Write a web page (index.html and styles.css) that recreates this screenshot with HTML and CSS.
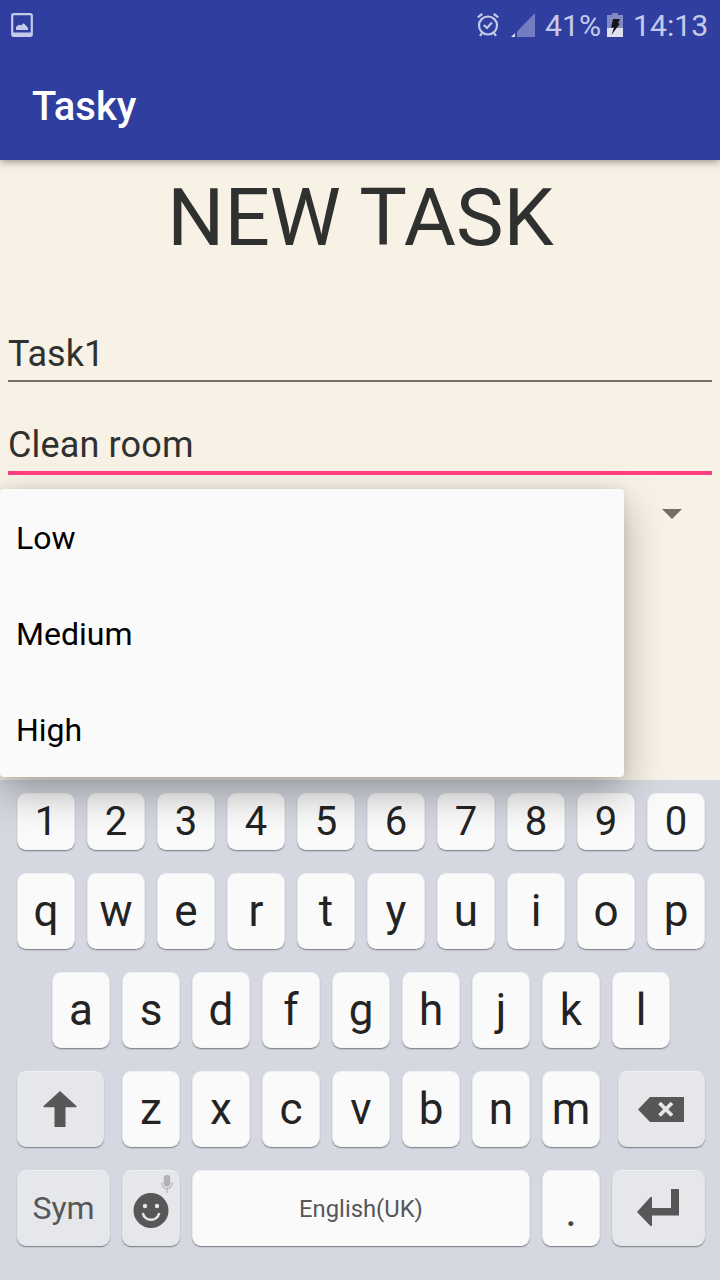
FILE: index.html
```html
<!DOCTYPE html>
<html lang="en">
<head>
<meta charset="utf-8">
<title>Tasky</title>
<link rel="stylesheet" href="styles.css">
</head>
<body>
<div class="screen">
  <header class="top">
    <div class="status">
      <svg class="photo" width="22" height="24" viewBox="0 0 22 24"><rect x="1.2" y="1.2" width="19.6" height="21.6" rx="1.5" fill="none" stroke="#c5cae9" stroke-width="2.2"/><path d="M2 19.5h18V23H2zM5 17v-3l3-2.5 2 1 2.500-2.200 2.500 2.200L17 15v2z" fill="#c5cae9"/></svg>
      <svg class="alarm" width="22" height="24" viewBox="0 0 22 24" fill="none" stroke="#c5cae9" stroke-width="2.2"><circle cx="11" cy="12.500" r="9"/><path d="M.8 4.300 5.300.8M21.200 4.300 16.700.8M5 20l-2 3M17 20l2 3M6.800 12l3.200 3 5-5.500"/></svg>
      <svg class="signal" width="24" height="24" viewBox="0 0 24 24"><path d="M6 18.500 24 0v24H6z" fill="#727cbf"/><path d="M0 24l4-4v4z" fill="#dcdff2"/></svg>
      <span class="percent">41%</span>
      <svg class="battery" width="16" height="24" viewBox="0 0 16 24"><path d="M5 0h6v2h5v13H0V2h5z" fill="#8289c5"/><path d="M0 15h16v9H0z" fill="#dfe1f1"/><path d="M6 6h7l-2 4.500h2L4.500 22 7 14.500H4z" fill="#151515"/></svg>
      <span class="clock">14:13</span>
    </div>
    <div class="appbar">Tasky</div>
  </header>
  <main class="form">
    <h1 class="title">NEW TASK</h1>
    <div class="field">Task1</div>
    <div class="field focused">Clean room</div>
    <div class="spinner"><svg width="20" height="10" viewBox="0 0 20 10"><path d="M0 0h20L10 10z" fill="#716f69"/></svg></div>
    <ul class="menu"><li>Low</li><li>Medium</li><li>High</li></ul>
  </main>
  <section class="keyboard">
    <div class="row numbers"><b>1</b><b>2</b><b>3</b><b>4</b><b>5</b><b>6</b><b>7</b><b>8</b><b>9</b><b>0</b></div>
    <div class="row"><b>q</b><b>w</b><b>e</b><b>r</b><b>t</b><b>y</b><b>u</b><b>i</b><b>o</b><b>p</b></div>
    <div class="row"><b>a</b><b>s</b><b>d</b><b>f</b><b>g</b><b>h</b><b>j</b><b>k</b><b>l</b></div>
    <div class="row">
      <b class="fn shift"><svg width="34" height="36" viewBox="0 0 34 36"><path d="M17 0 33.500 15v1.200H22.500V36h-11V16.200H.5V15z" fill="#575757"/></svg></b>
      <b>z</b><b>x</b><b>c</b><b>v</b><b>b</b><b>n</b><b>m</b>
      <b class="fn delete"><svg width="46" height="25" viewBox="0 0 46 25"><path d="M0 12.500 12 0h34v25H12z" fill="#575757"/><path d="M21.500 6 34 18.500M34 6 21.500 18.500" stroke="#e6e7eb" stroke-width="3.800"/></svg></b>
    </div>
    <div class="row">
      <b class="fn sym">Sym</b>
      <b class="fn emoji">
        <svg class="mic" width="12" height="18" viewBox="0 0 12 18"><rect x="2.700" y="0" width="6.600" height="11.500" rx="3" fill="#b1b2b5"/><path d="M.7 7.500c0 8 10.600 8 10.600 0M6 13.500V18" fill="none" stroke="#b1b2b5" stroke-width="1.200"/></svg>
        <svg class="face" width="36" height="36" viewBox="0 0 36 36"><circle cx="18" cy="17.500" r="17.500" fill="#575757"/><circle cx="12" cy="13" r="2.200" fill="#e6e7eb"/><circle cx="24" cy="13" r="2.200" fill="#e6e7eb"/><path d="M9.800 20c1.800 9 14.600 9 16.400 0" fill="none" stroke="#e6e7eb" stroke-width="2.500"/></svg>
      </b>
      <b class="space">English(UK)</b>
      <b class="dot">.</b>
      <b class="fn enter"><svg width="42" height="38" viewBox="0 0 42 38"><path d="M34 0h8v26.500H15V37h-1.500L0 23 13.500 8H15v11h19z" fill="#575757"/></svg></b>
    </div>
  </section>
</div>
</body>
</html>
```
FILE: styles.css
```css
* { box-sizing: border-box; }
body { margin: 0; font-family: Roboto, sans-serif; }
svg { display: block; flex: none; }
.screen { width: 720px; height: 1280px; display: flex; flex-direction: column; overflow: hidden; }
.top { height: 160px; background: #303f9f; box-shadow: 0 2px 8px rgba(0,0,0,.4); position: relative; z-index: 1; }
.status { height: 50px; padding: 0 12px 0 11px; display: flex; align-items: center; color: #c5cae9; font-size: 30.2px; line-height: 50px; white-space: nowrap; }
.status span { padding-top: 2px; }
.alarm { margin-left: auto; margin-right: 12px; }
.signal { margin-right: 10px; }
.percent { width: 55px; margin-right: 7px; }
.battery { margin-right: 10px; }
.clock { width: 75px; }
.appbar { height: 112px; padding-left: 32px; color: #fff; font-size: 40px; font-weight: 500; line-height: 114px; }
.form { height: 620px; background: #f8f1e5; position: relative; }
.title { margin: 0; height: 147px; padding-left: 1px; font-size: 80px; font-weight: 400; line-height: 117px; text-align: center; color: #2f3130; }
.field { margin: 0 8px; height: 75px; padding-top: 25px; border-bottom: 2px solid #716f69; font-size: 36px; line-height: 44px; color: #2f3130; }
.focused { height: 93px; padding-top: 41px; border-bottom: 4px solid #ff4081; letter-spacing: .15px; }
.spinner { display: flex; justify-content: flex-end; padding: 34px 38px 0 0; }
.menu { position: absolute; left: 0; top: 329px; z-index: 2; width: 624px; margin: 0; padding: 0; list-style: none; background: #fafafa; border-radius: 4px; font-size: 32px; color: #000; box-shadow: 0 16px 40px rgba(0,0,0,.3), 0 0 10px rgba(0,0,0,.08); }
.menu li { height: 96px; padding-left: 16px; line-height: 99px; }
.keyboard { flex: 1; padding-top: 13px; background: #d5d8e0; display: flex; flex-direction: column; gap: 23px; }
.row { display: flex; justify-content: center; gap: 12px; padding-left: 2px; }
.row b { width: 58px; height: 76px; flex: none; display: flex; align-items: center; justify-content: center; background: #fafafa; border-radius: 9px; border: 1px solid #e8eaee; border-top-color: #f0f1f4; border-bottom-color: #f5f5f5; box-shadow: 0 1px 1px rgba(0,0,0,.35), 0 2px 2px rgba(0,0,0,.06); font-size: 44px; font-weight: 400; color: #232323; line-height: 1; }
.row.numbers b { height: 57px; font-size: 40px; }
.row .fn { background: #e6e7eb; color: #575757; border-color: #e2e4e9; border-top-color: #f0f1f4; }
.row .shift { width: 87px; margin-right: 6px; padding-right: 2px; }
.row .delete { width: 87px; margin-left: 6px; padding-right: 2px; }
.row .sym { width: 93px; font-size: 32px; }
.row .emoji { flex-direction: column; align-items: center; justify-content: flex-start; padding-top: 4px; }
.mic { margin: 0 6px 0 auto; }
.row .space { width: 338px; font-size: 23.8px; line-height: 24px; padding-top: 2px; color: #575757; }
.row .dot { padding-top: 6px; color: #444; }
.row .enter { width: 93px; padding-right: 2px; }
```
